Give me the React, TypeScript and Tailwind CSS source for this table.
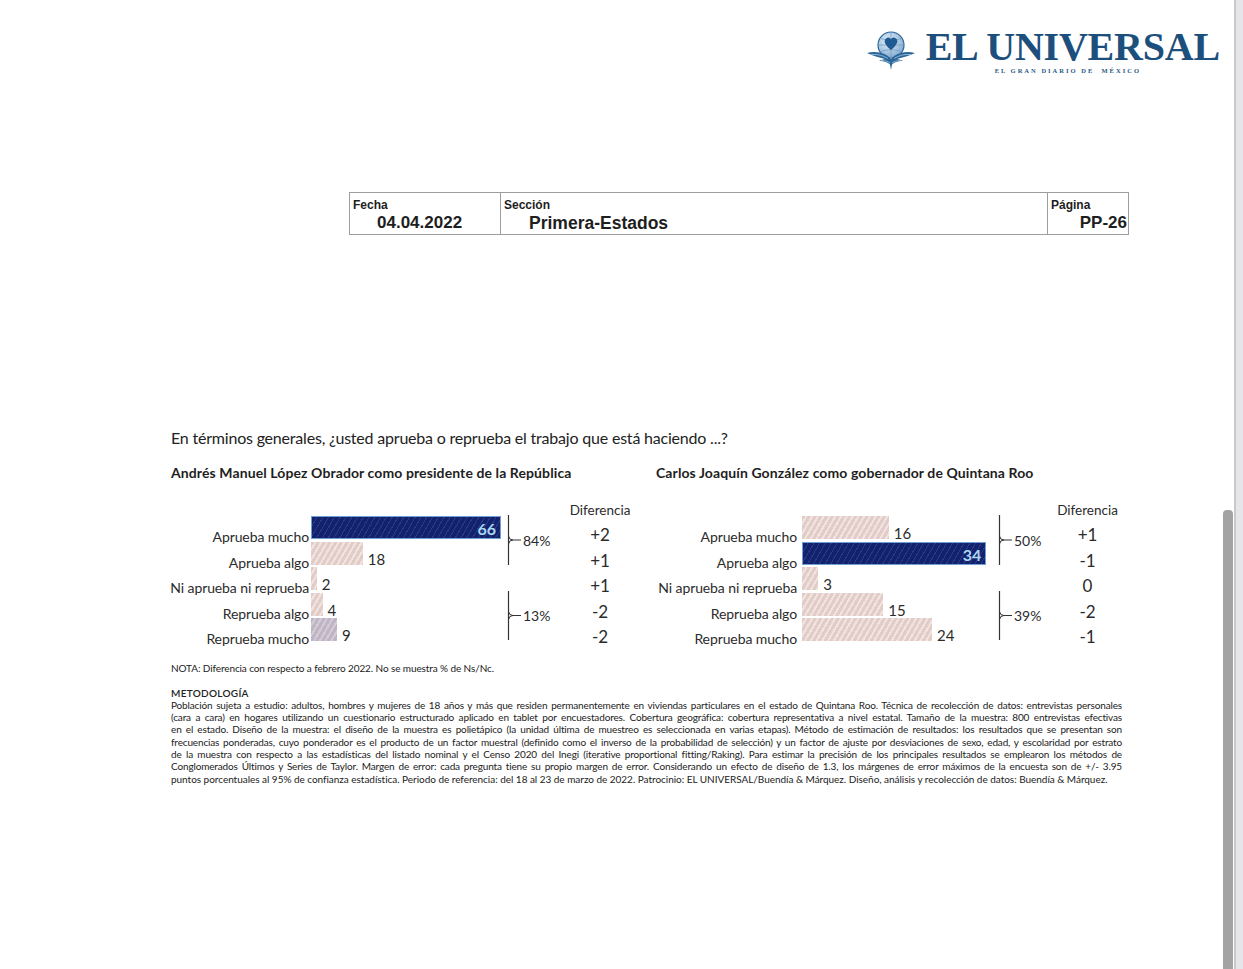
import React from 'react';

type Tone = 'blue' | 'pink' | 'gray';

type Row = { label: string; value: number; diff: string; tone: Tone };

const toneClass: Record<Tone, string> = {
  blue: 'bg-[repeating-linear-gradient(120deg,#13226a_0px,#13226a_4px,#243c8c_4px,#243c8c_5px)] border border-[#6f9fd6]',
  pink: 'bg-[repeating-linear-gradient(120deg,#e2ccc7_0px,#e2ccc7_3px,#f1e3df_3px,#f1e3df_5px)]',
  gray: 'bg-[repeating-linear-gradient(120deg,#bfb5c4_0px,#bfb5c4_3px,#d3cbd6_3px,#d3cbd6_5px)]',
};

const leftRows: Row[] = [
  { label: 'Aprueba mucho', value: 66, diff: '+2', tone: 'blue' },
  { label: 'Aprueba algo', value: 18, diff: '+1', tone: 'pink' },
  { label: 'Ni aprueba ni reprueba', value: 2, diff: '+1', tone: 'pink' },
  { label: 'Reprueba algo', value: 4, diff: '-2', tone: 'pink' },
  { label: 'Reprueba mucho', value: 9, diff: '-2', tone: 'gray' },
];

const rightRows: Row[] = [
  { label: 'Aprueba mucho', value: 16, diff: '+1', tone: 'pink' },
  { label: 'Aprueba algo', value: 34, diff: '-1', tone: 'blue' },
  { label: 'Ni aprueba ni reprueba', value: 3, diff: '0', tone: 'pink' },
  { label: 'Reprueba algo', value: 15, diff: '-2', tone: 'pink' },
  { label: 'Reprueba mucho', value: 24, diff: '-1', tone: 'pink' },
];

const metodologia = [
  'Población sujeta a estudio: adultos, hombres y mujeres de 18 años y más que residen permanentemente en viviendas particulares en el estado de Quintana Roo. Técnica de recolección de datos: entrevistas personales',
  '(cara a cara) en hogares utilizando un cuestionario estructurado aplicado en tablet por encuestadores. Cobertura geográfica: cobertura representativa a nivel estatal. Tamaño de la muestra: 800 entrevistas efectivas',
  'en el estado. Diseño de la muestra: el diseño de la muestra es polietápico (la unidad última de muestreo es seleccionada en varias etapas). Método de estimación de resultados: los resultados que se presentan son',
  'frecuencias ponderadas, cuyo ponderador es el producto de un factor muestral (definido como el inverso de la probabilidad de selección) y un factor de ajuste por desviaciones de sexo, edad, y escolaridad por estrato',
  'de la muestra con respecto a las estadísticas del listado nominal y el Censo 2020 del Inegi (iterative proportional fitting/Raking). Para estimar la precisión de los principales resultados se emplearon los métodos de',
  'Conglomerados Últimos y Series de Taylor. Margen de error: cada pregunta tiene su propio margen de error. Considerando un efecto de diseño de 1.3, los márgenes de error máximos de la encuesta son de +/- 3.95',
];

const lastLine =
  'puntos porcentuales al 95% de confianza estadística. Periodo de referencia: del 18 al 23 de marzo de 2022. Patrocinio: EL UNIVERSAL/Buendía & Márquez. Diseño, análisis y recolección de datos: Buendía & Márquez.';

const Logo = () => (
  <div className="flex items-start gap-[10px]">
    <svg width="50" height="42" viewBox="0 0 50 42" className="mt-[2px]">
      <defs>
        <radialGradient id="globe" cx="0.4" cy="0.35" r="0.7">
          <stop offset="0" stopColor="#e4f0fa" />
          <stop offset="1" stopColor="#7fa9cf" />
        </radialGradient>
      </defs>
      <circle cx="25" cy="16" r="13" fill="url(#globe)" stroke="#2f6699" strokeWidth="1.2" />
      <path d="M12.5 16 H37.5 M25 3 V29 M14.5 9.5 Q25 13 35.5 9.5 M14.5 22.5 Q25 19 35.5 22.5" fill="none" stroke="#6d99c4" strokeWidth="0.7" />
      <path d="M25 21 C19 16 17 12 20 9.5 C22.5 7.5 24.5 9 25 10.5 C25.5 9 27.5 7.5 30 9.5 C33 12 31 16 25 21 Z" fill="#1f5a92" />
      <path d="M1 24 C9 22 16 23.5 22 27 L25 30 L28 27 C34 23.5 41 22 49 24 C43 27 37 28 31 30 L37 31.5 C31 32.5 28 33.5 26 35.5 L25 41 L24 35.5 C22 33.5 19 32.5 13 31.5 L19 30 C13 28 7 27 1 24 Z" fill="#2b6699" />
      <path d="M5 25.5 C12 25 17 26.5 22 29.5 M45 25.5 C38 25 33 26.5 28 29.5 M15 31.5 C19 31.5 22 32.5 24 34 M35 31.5 C31 31.5 28 32.5 26 34" fill="none" stroke="#a8c6e2" strokeWidth="0.8" />
    </svg>
    <div className="flex flex-col items-center">
      <div className="[font-family:'Liberation_Serif',serif] text-[40px] font-bold leading-[40px] tracking-[-0.2px] text-[#1d4f7d]">
        EL UNIVERSAL
      </div>
      <div className="-ml-[10px] [font-family:'Liberation_Serif',serif] text-[6.5px] font-bold leading-[8px] tracking-[2px] text-[#2a5a86]">
        EL GRAN DIARIO DE&nbsp; MÉXICO
      </div>
    </div>
  </div>
);

const Bracket = ({ h }: { h: number }) => {
  const m = h / 2;
  return (
    <svg width="18" height={h} viewBox={`0 0 18 ${h}`} className="block">
      <path d={`M1.5 0 V${h}`} stroke="#333" strokeWidth="1.2" fill="none" />
      <path d={`M1.5 ${m - 4} Q2 ${m} 6 ${m} H14 M1.5 ${m + 4} Q2 ${m} 6 ${m}`} stroke="#333" strokeWidth="1" fill="none" />
    </svg>
  );
};

const Chart = ({
  rows,
  scale,
  cols,
  barPad,
  pctTop,
  pctBottom,
}: {
  rows: Row[];
  scale: number;
  cols: string;
  barPad: string;
  pctTop: string;
  pctBottom: string;
}) => (
  <div className={`grid ${cols} grid-rows-[14px_repeat(5,25.5px)] text-[#2b2b2b]`}>
    <div className="col-start-4 row-start-1 mt-[2px] text-center text-[13.5px] leading-[14px]">Diferencia</div>

    {rows.map((r, i) => (
      <React.Fragment key={r.label}>
        <div
          className="col-start-1 pt-[14px] text-right text-[14px] leading-4 tracking-[-0.1px] whitespace-nowrap"
          style={{ gridRowStart: i + 2 }}
        >
          {r.label}
        </div>
        <div className={`col-start-2 flex items-start ${barPad}`} style={{ gridRowStart: i + 2 }}>
          <div
            className={`relative mt-[1px] h-[23px] shrink-0 ${toneClass[r.tone]}`}
            style={{ width: r.value * scale }}
          >
            {r.tone === 'blue' && (
              <span className="absolute right-[4px] top-[3px] text-[16px] font-bold leading-[18px] text-[#aad6f2]">
                {r.value}
              </span>
            )}
          </div>
          {r.tone !== 'blue' && (
            <span className="ml-[5px] pt-[9px] text-[15px] leading-[18px]">{r.value}</span>
          )}
        </div>
        <div className="col-start-4 pt-[11px] text-center text-[17px] leading-[18px]" style={{ gridRowStart: i + 2 }}>
          {r.diff}
        </div>
      </React.Fragment>
    ))}

    <div className="col-start-3 row-start-2 row-span-2 flex items-center">
      <div className="ml-[1px] -mt-[1px]">
        <Bracket h={50} />
      </div>
      <span className="-ml-[2px] text-[14px] leading-4">{pctTop}</span>
    </div>
    <div className="col-start-3 row-start-5 row-span-2 flex items-center">
      <div className="ml-[1px] -mt-[3px]">
        <Bracket h={49} />
      </div>
      <span className="-ml-[2px] -mt-[3px] text-[14px] leading-4">{pctBottom}</span>
    </div>
  </div>
);

export default function App() {
  return (
    <div className="relative h-[969px] w-[1243px] overflow-hidden bg-white [font-family:Lato,sans-serif]">
      {/* scroll track */}
      <div className="absolute right-0 top-0 h-full w-[9px] border-l-2 border-[#c9c9cc] bg-[#e6e6ea]" />
      <div className="absolute left-[1223px] top-[510px] h-[459px] w-[10px] rounded-t-[4px] bg-[#a3a3a3]" />

      <div className="flex justify-end pr-[23px] pt-[27px]">
        <Logo />
      </div>

      {/* header table */}
      <div className="ml-[349px] mt-[117px] grid h-[43px] w-[780px] grid-cols-[151px_547px_1fr] border border-[#9d9d9d] [font-family:'Liberation_Sans',Arial,sans-serif] font-bold text-[#1e1e1e]">
        <div className="border-r border-[#9d9d9d] pl-[3px] pt-[6px]">
          <div className="text-[12px] leading-[13px]">Fecha</div>
          <div className="pl-[24px] text-[17px] leading-[22px]">04.04.2022</div>
        </div>
        <div className="border-r border-[#9d9d9d] pl-[3px] pt-[6px]">
          <div className="text-[12px] leading-[13px]">Sección</div>
          <div className="pl-[25px] text-[17.5px] leading-[22px]">Primera-Estados</div>
        </div>
        <div className="pl-[3px] pr-[1px] pt-[6px]">
          <div className="text-[12px] leading-[13px]">Página</div>
          <div className="text-right text-[17px] leading-[22px]">PP-26</div>
        </div>
      </div>

      {/* survey */}
      <div className="ml-[158px] mt-[193px] w-[968px]">
        <div className="pl-[13px] text-[16px] leading-[20px] tracking-[-0.2px] text-[#222]">
          En términos generales, ¿usted aprueba o reprueba el trabajo que está haciendo ...?
        </div>

        <div className="mt-[17px] flex">
          <div className="w-[487px]">
            <div className="pl-[13px] text-[14px] font-bold leading-4 tracking-[0.1px] text-[#1e1e1e]">
              Andrés Manuel López Obrador como presidente de la República
            </div>
            <div className="mt-[20px]">
              <Chart
                rows={leftRows}
                scale={2.88}
                cols="grid-cols-[151px_197px_58px_72px]"
                barPad="pl-[2px]"
                pctTop="84%"
                pctBottom="13%"
              />
            </div>
          </div>
          <div>
            <div className="pl-[11px] text-[14px] font-bold leading-4 tracking-[0.1px] text-[#1e1e1e]">
              Carlos Joaquín González como gobernador de Quintana Roo
            </div>
            <div className="mt-[20px]">
              <Chart
                rows={rightRows}
                scale={5.42}
                cols="grid-cols-[152px_200px_58px_65px]"
                barPad="pl-[5px]"
                pctTop="50%"
                pctBottom="39%"
              />
            </div>
          </div>
        </div>

        <div className="mt-[19px] pl-[13px] text-[10px] leading-[12px] tracking-[-0.1px] text-[#222]">
          NOTA: Diferencia con respecto a febrero 2022. No se muestra % de Ns/Nc.
        </div>

        <div className="mt-[13px] w-[964px] pl-[13px] text-[10px] leading-[12.3px] tracking-[-0.15px] text-[#222]">
          <div className="font-semibold tracking-[0.3px]">METODOLOGÍA</div>
          {metodologia.map((line) => (
            <div key={line} className="text-justify [text-align-last:justify]">
              {line}
            </div>
          ))}
          <div className="tracking-[-0.03px]">{lastLine}</div>
        </div>
      </div>
    </div>
  );
}
